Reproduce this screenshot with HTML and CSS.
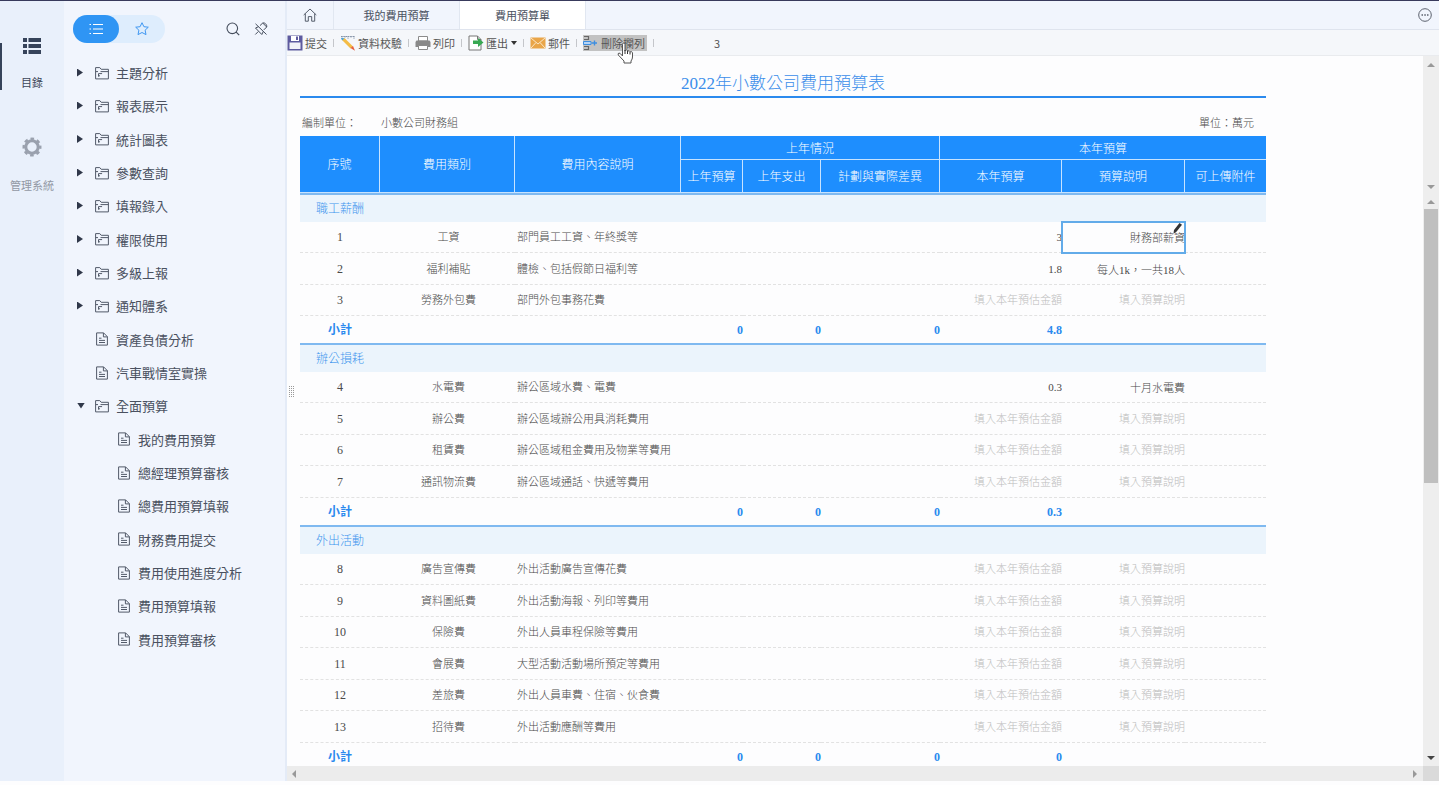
FILE: index.html
```html
<!DOCTYPE html>
<html lang="zh-Hant">
<head>
  <meta charset="UTF-8" />
  <meta name="viewport" content="width=device-width, initial-scale=1.0"/>
  <title>費用預算單</title>
  <link rel="stylesheet" href="styles.css">
</head>
<body>
  <!-- Shared icons -->
  <svg class="sprite" aria-hidden="true">
    <symbol id="i-folder" viewBox="0 0 14 14">
      <path d="M.6 12.900V1.600h4.200l1.400 1.700h7.200v9.600zM.6 5.600h2.400M5.500 5.600h7.900M3.500 10.500V7.600h3.600M3 9.800h2" fill="none" stroke="currentColor"/>
    </symbol>
    <symbol id="i-doc" viewBox="0 0 14 14">
      <path d="M1.600.9h7l3.800 3.800v8.400H1.600zM8.400.9v4h4M4 6.200h2.500M4 8.400h6M4 10.500h6" fill="none" stroke="currentColor"/>
    </symbol>
  </svg>

  <div class="app">
    <nav class="rail">
      <a href="#" class="rail-item active">
        <svg width="18" height="16" viewBox="0 0 18 16"><path d="M0 0h4v4H0zM5.500 0H18v4H5.500zM0 6h4v4H0zM5.500 6H18v4H5.500zM0 12h4v4H0zM5.500 12H18v4H5.500z" fill="#36435a"/></svg>
        <span>目錄</span>
      </a>
      <a href="#" class="rail-item">
        <svg width="20" height="20" viewBox="0 0 20 20">
          <circle cx="10" cy="10" r="6.200" fill="none" stroke="#9aa1ae" stroke-width="3"/>
          <circle cx="10" cy="10" r="8.300" fill="none" stroke="#9aa1ae" stroke-width="2.400" stroke-dasharray="3.600 2.919" stroke-dashoffset="1.800"/>
        </svg>
        <span>管理系統</span>
      </a>
    </nav>

    <aside class="sidebar">
      <div class="side-head">
        <div class="switch">
          <button type="button" class="on" aria-label="目錄">
            <svg width="14" height="12" viewBox="0 0 14 12"><path d="M4 1.500h10M4 6h10M4 10.500h10M.5 1.500H2M.5 6H2M.5 10.500H2" stroke="#fff" stroke-width="1.200"/></svg>
          </button>
          <button type="button" aria-label="收藏">
            <svg width="14" height="14" viewBox="0 0 14 14"><path d="M7 .7l1.900 4 4.400.5-3.200 3 .9 4.400L7 10.500l-4 2.100.9-4.400-3.200-3 4.400-.5z" fill="none" stroke="#3f97f2" stroke-linejoin="round"/></svg>
          </button>
        </div>
        <button type="button" class="icon-btn" aria-label="搜尋">
          <svg width="14" height="14" viewBox="0 0 14 14"><circle cx="6.300" cy="6.300" r="5.300" fill="none" stroke="#454d5c" stroke-width="1.100"/><path d="M10.200 10.200l3 3" stroke="#454d5c" stroke-width="1.200"/></svg>
        </button>
        <button type="button" class="icon-btn" aria-label="取消固定">
          <svg width="14" height="14" viewBox="0 0 14 14"><path d="M1.500 1.800l11 10.700M4.500 4.700L1.500 6l6.300 6.500 1.600-3.200M6 3.600L8.700 1l4 4-2.900 2.900M8.700 1c1.800-.8 4.600 1.600 4 4M4.300 9.500L1.300 12.500" fill="none" stroke="#454d5c"/></svg>
        </button>
      </div>
      <ul class="tree">
        <li><a href="#"><i class="caret"></i><svg><use href="#i-folder"/></svg>主題分析</a></li>
        <li><a href="#"><i class="caret"></i><svg><use href="#i-folder"/></svg>報表展示</a></li>
        <li><a href="#"><i class="caret"></i><svg><use href="#i-folder"/></svg>統計圖表</a></li>
        <li><a href="#"><i class="caret"></i><svg><use href="#i-folder"/></svg>參數查詢</a></li>
        <li><a href="#"><i class="caret"></i><svg><use href="#i-folder"/></svg>填報錄入</a></li>
        <li><a href="#"><i class="caret"></i><svg><use href="#i-folder"/></svg>權限使用</a></li>
        <li><a href="#"><i class="caret"></i><svg><use href="#i-folder"/></svg>多級上報</a></li>
        <li><a href="#"><i class="caret"></i><svg><use href="#i-folder"/></svg>通知體系</a></li>
        <li><a href="#"><i class="caret none"></i><svg><use href="#i-doc"/></svg>資產負債分析</a></li>
        <li><a href="#"><i class="caret none"></i><svg><use href="#i-doc"/></svg>汽車戰情室實操</a></li>
        <li><a href="#"><i class="caret open"></i><svg><use href="#i-folder"/></svg>全面預算</a></li>
        <li class="sub"><a href="#"><svg><use href="#i-doc"/></svg>我的費用預算</a></li>
        <li class="sub"><a href="#"><svg><use href="#i-doc"/></svg>總經理預算審核</a></li>
        <li class="sub"><a href="#"><svg><use href="#i-doc"/></svg>總費用預算填報</a></li>
        <li class="sub"><a href="#"><svg><use href="#i-doc"/></svg>財務費用提交</a></li>
        <li class="sub"><a href="#"><svg><use href="#i-doc"/></svg>費用使用進度分析</a></li>
        <li class="sub"><a href="#"><svg><use href="#i-doc"/></svg>費用預算填報</a></li>
        <li class="sub"><a href="#"><svg><use href="#i-doc"/></svg>費用預算審核</a></li>
      </ul>
      <span class="grip"></span>
    </aside>

    <main>
      <div class="tabs">
        <a href="#" class="tab home" aria-label="首頁">
          <svg width="14" height="14" viewBox="0 0 14 14"><path d="M.7 7L7 1l6.300 6M2.300 5.600v7.600h3V8.600h3.400v4.600h3V5.600" fill="none" stroke="#555d6b"/></svg>
        </a>
        <a href="#" class="tab">我的費用預算</a>
        <a href="#" class="tab active">費用預算單</a>
        <button type="button" class="more" aria-label="更多">
          <svg width="14" height="14" viewBox="0 0 14 14"><circle cx="7" cy="7" r="6.300" fill="none" stroke="#5c626e"/><path d="M3.500 6.300H5v1.400H3.500zM6.300 6.300h1.500v1.400H6.300zM9 6.300h1.500v1.400H9z" fill="#5c626e"/></svg>
        </button>
      </div>

      <div class="toolbar">
        <button type="button">
          <svg width="16" height="16" viewBox="0 0 16 16"><path d="M.5.500h15v15H.5z" fill="#5d5a9f"/><path d="M4 1h8v5H4z" fill="#fff"/><path d="M9 1.500h2V5H9z" fill="#5d5a9f"/><path d="M2.500 7.500h11V14h-11z" fill="#f2f2f8"/></svg>
          提交
        </button>
        <i class="sep"></i>
        <button type="button">
          <svg width="16" height="16" viewBox="0 0 16 16"><path d="M1 1.500h14M2 1v3M5 1v2M8 1v3M11 1v2M14 1v3" stroke="#8593a8" fill="none" stroke-dasharray="1.500 .8"/><path d="M2 5l2.500-2 8.500 8.500-2.500 2z" fill="#f4bc45"/><path d="M1 3l3.500.2-2.400 2.400z" fill="#3e9ed7"/><path d="M10.500 13l2.500-2 2 4.800z" fill="#e5603e"/></svg>
          資料校驗
        </button>
        <i class="sep"></i>
        <button type="button">
          <svg width="16" height="16" viewBox="0 0 16 16"><path d="M3.500 1.500h9V6h-9z" fill="#fff" stroke="#8b8b8b"/><path d="M1.500 5.500h13l1 1.500v5H.5V7z" fill="#898989"/><path d="M3.500 10.500h9v4h-9z" fill="#fff" stroke="#8b8b8b"/></svg>
          列印
        </button>
        <i class="sep"></i>
        <button type="button">
          <svg width="16" height="16" viewBox="0 0 16 16"><path d="M1 1h8.500L13 4.500V15H1z" fill="#fff" stroke="#777"/><path d="M9.500 1v3.500H13" fill="none" stroke="#777"/><path d="M5 5.500h5V3l5.500 4.500L10 12V9H5z" fill="#38a852"/></svg>
          匯出
          <i class="drop"></i>
        </button>
        <i class="sep"></i>
        <button type="button">
          <svg width="16" height="16" viewBox="0 0 16 16"><path d="M.5 2.500h15v11H.5z" fill="#e9a548"/><path d="M1 3l7 6 7-6M1 13l5-5.500M15 13l-5-5.500" fill="none" stroke="#fbe6c4"/></svg>
          郵件
        </button>
        <i class="sep"></i>
        <button type="button" class="hover">
          <svg width="16" height="16" viewBox="0 0 16 16"><path d="M1 1.500h4.500v3H1M1 11.500h4.500v3H1" fill="none" stroke="#666" stroke-width="1.200"/><path d="M.5 6.500H8v3H.5z" fill="#b7d5f5" stroke="#3d8ee0"/><path d="M8.500 8h5.500M11.500 5.500v5" stroke="#3d8ee0" stroke-width="1.400"/></svg>
          刪除欄列
          <svg class="cursor" width="17" height="22" viewBox="0 0 17 22"><path d="M5.500 14V2.500Q5.500 1 6.800 1T8 2.500V9q.2-1.300 1.400-1.200t1.200 1.300q1.800-1 2.500.7 2-.8 2.400 1V15q0 2-1.500 4v2H7v-2L1.300 13q-.8-1.500.7-2 1-.2 3.500 3z" fill="#fff" stroke="#555" stroke-linejoin="round"/><path d="M8 8v4M10.500 9v3M13 10v2.500" stroke="#333"/></svg>
        </button>
        <i class="sep"></i>
        <span class="page">3</span>
      </div>

      <div class="view">
        <div class="report">
          <h1>2022年小數公司費用預算表</h1>
          <div class="info">
            <span class="info-label">編制單位：</span>
            <span>小數公司財務組</span>
            <span class="unit">單位：萬元</span>
          </div>
          <table>
            <colgroup>
              <col class="c-no"><col class="c-type"><col class="c-desc"><col class="c-last"><col class="c-spent"><col class="c-diff"><col class="c-budget"><col class="c-note"><col>
            </colgroup>
            <thead>
              <tr>
                <th rowspan="2">序號</th>
                <th rowspan="2">費用類別</th>
                <th rowspan="2">費用內容說明</th>
                <th colspan="3">上年情況</th>
                <th colspan="3">本年預算</th>
              </tr>
              <tr class="second">
                <th>上年預算</th><th>上年支出</th><th>計劃與實際差異</th><th>本年預算</th><th>預算說明</th><th>可上傳附件</th>
              </tr>
            </thead>
            <tbody>
              <tr class="group"><td colspan="9">職工薪酬</td></tr>
              <tr><td>1</td><td>工資</td><td>部門員工工資、年終獎等</td><td></td><td></td><td></td>
                <td><input aria-label="本年預算" placeholder="填入本年預估金額" value="3"></td>
                <td class="selected"><input aria-label="預算說明" placeholder="填入預算說明" value="財務部薪資"><svg class="pencil" width="9" height="11" viewBox="0 0 9 11"><path d="M6.500 0L9 1.800 3 9.200.5 10.500 1 7z" fill="#333"/></svg></td><td></td></tr>
              <tr><td>2</td><td>福利補貼</td><td>體檢、包括假節日福利等</td><td></td><td></td><td></td>
                <td><input aria-label="本年預算" placeholder="填入本年預估金額" value="1.8"></td>
                <td><input aria-label="預算說明" placeholder="填入預算說明" value="每人1k，一共18人"></td><td></td></tr>
              <tr><td>3</td><td>勞務外包費</td><td>部門外包事務花費</td><td></td><td></td><td></td>
                <td><input aria-label="本年預算" placeholder="填入本年預估金額"></td>
                <td><input aria-label="預算說明" placeholder="填入預算說明"></td><td></td></tr>
              <tr class="total"><td>小計</td><td></td><td></td><td>0</td><td>0</td><td>0</td><td>4.8</td><td></td><td></td></tr>
            </tbody>
            <tbody>
              <tr class="group"><td colspan="9">辦公損耗</td></tr>
              <tr><td>4</td><td>水電費</td><td>辦公區域水費、電費</td><td></td><td></td><td></td>
                <td><input aria-label="本年預算" placeholder="填入本年預估金額" value="0.3"></td>
                <td><input aria-label="預算說明" placeholder="填入預算說明" value="十月水電費"></td><td></td></tr>
              <tr><td>5</td><td>辦公費</td><td>辦公區域辦公用具消耗費用</td><td></td><td></td><td></td>
                <td><input aria-label="本年預算" placeholder="填入本年預估金額"></td>
                <td><input aria-label="預算說明" placeholder="填入預算說明"></td><td></td></tr>
              <tr><td>6</td><td>租賃費</td><td>辦公區域租金費用及物業等費用</td><td></td><td></td><td></td>
                <td><input aria-label="本年預算" placeholder="填入本年預估金額"></td>
                <td><input aria-label="預算說明" placeholder="填入預算說明"></td><td></td></tr>
              <tr><td>7</td><td>通訊物流費</td><td>辦公區域通話、快遞等費用</td><td></td><td></td><td></td>
                <td><input aria-label="本年預算" placeholder="填入本年預估金額"></td>
                <td><input aria-label="預算說明" placeholder="填入預算說明"></td><td></td></tr>
              <tr class="total"><td>小計</td><td></td><td></td><td>0</td><td>0</td><td>0</td><td>0.3</td><td></td><td></td></tr>
            </tbody>
            <tbody>
              <tr class="group"><td colspan="9">外出活動</td></tr>
              <tr><td>8</td><td>廣告宣傳費</td><td>外出活動廣告宣傳花費</td><td></td><td></td><td></td>
                <td><input aria-label="本年預算" placeholder="填入本年預估金額"></td>
                <td><input aria-label="預算說明" placeholder="填入預算說明"></td><td></td></tr>
              <tr><td>9</td><td>資料圖紙費</td><td>外出活動海報、列印等費用</td><td></td><td></td><td></td>
                <td><input aria-label="本年預算" placeholder="填入本年預估金額"></td>
                <td><input aria-label="預算說明" placeholder="填入預算說明"></td><td></td></tr>
              <tr><td>10</td><td>保險費</td><td>外出人員車程保險等費用</td><td></td><td></td><td></td>
                <td><input aria-label="本年預算" placeholder="填入本年預估金額"></td>
                <td><input aria-label="預算說明" placeholder="填入預算說明"></td><td></td></tr>
              <tr><td>11</td><td>會展費</td><td>大型活動活動場所預定等費用</td><td></td><td></td><td></td>
                <td><input aria-label="本年預算" placeholder="填入本年預估金額"></td>
                <td><input aria-label="預算說明" placeholder="填入預算說明"></td><td></td></tr>
              <tr><td>12</td><td>差旅費</td><td>外出人員車費、住宿、伙食費</td><td></td><td></td><td></td>
                <td><input aria-label="本年預算" placeholder="填入本年預估金額"></td>
                <td><input aria-label="預算說明" placeholder="填入預算說明"></td><td></td></tr>
              <tr><td>13</td><td>招待費</td><td>外出活動應酬等費用</td><td></td><td></td><td></td>
                <td><input aria-label="本年預算" placeholder="填入本年預估金額"></td>
                <td><input aria-label="預算說明" placeholder="填入預算說明"></td><td></td></tr>
              <tr class="total"><td>小計</td><td></td><td></td><td>0</td><td>0</td><td>0</td><td>0</td><td></td><td></td></tr>
            </tbody>
          </table>
        </div>
        <div class="vbars">
          <div class="vbar head"><i class="up"></i><i class="down"></i></div>
          <div class="vbar body"><i class="up"></i><span class="thumb"></span><i class="down dark"></i></div>
        </div>
      </div>
      <div class="hbar"><i class="left"></i><i class="right"></i><span class="corner"></span></div>
    </main>
  </div>
</body>
</html>
```
FILE: styles.css
```css
* { box-sizing: border-box; }
body { margin: 0; height: 100vh; overflow: hidden; background: #fdfdfe; color: #4a5160; font-family: "Noto Sans CJK TC", sans-serif; font-size: 11px; }
a { color: inherit; text-decoration: none; }
button { border: 0; padding: 0; background: none; color: inherit; font: inherit; }
svg { display: block; flex: none; }
.sprite { position: absolute; width: 0; height: 0; }
.app { display: flex; height: 100%; padding-bottom: 4px; border-top: 1px solid #383a5c; }

/* left rail */
.rail { position: relative; width: 64px; padding-top: 37px; background: #e9f0fb; display: flex; flex-direction: column; gap: 46px; }
.rail::before { content: ""; position: absolute; left: 0; top: 42px; width: 2px; height: 47px; background: #36435a; }
.rail-item { display: flex; flex-direction: column; align-items: center; gap: 19px; line-height: 18px; color: #9298a4; }
.rail-item.active { color: #3c4658; }

/* tree */
.sidebar { position: relative; width: 223px; background: #f1f5fd; border-right: 2px solid #e4ebf7; }
.side-head { display: flex; align-items: center; gap: 14px; padding: 14px 17px 0 9px; }
.switch { display: flex; margin-right: auto; border-radius: 14px; background: #deedfd; }
.switch button { width: 46px; height: 28px; border-radius: 14px; display: flex; align-items: center; justify-content: center; }
.switch .on { background: #2f95f4; }
.tree { list-style: none; margin: 13px 0 0; padding: 0; font-size: 13px; }
.tree li { height: 33px; }
.tree li:nth-child(3n) { height: 34px; }
.tree a { height: 100%; display: flex; align-items: center; padding-left: 13px; }
.tree .sub a { padding-left: 53px; }
.tree svg { width: 14px; height: 14px; margin-right: 7px; color: #525a69; }
.caret { width: 6px; height: 8px; margin-right: 12px; background: #30384a; clip-path: polygon(0 0, 100% 50%, 0 100%); }
.caret.open { width: 8px; height: 6px; margin-right: 10px; clip-path: polygon(0 0, 100% 0, 50% 100%); }
.caret.none { visibility: hidden; }
.grip { position: absolute; z-index: 1; right: -9px; top: 384px; width: 5px; height: 13px; background: repeating-linear-gradient(#fdfdfe 0 1px, transparent 1px 2px), repeating-linear-gradient(90deg, #999 0 1px, #fdfdfe 1px 2px); }

/* main area */
main { flex: 1; min-width: 0; display: flex; flex-direction: column; }
.tabs { display: flex; height: 29px; background: #f1f5fd; border-bottom: 1px solid #dfe4ee; }
.tab { width: 126px; display: flex; align-items: center; justify-content: center; border-right: 1px solid #e1e7f1; }
.tab.home { width: 47px; }
.tab.active { background: #fff; }
.more { margin-left: auto; padding-right: 7px; }
.toolbar { display: flex; align-items: center; height: 26px; background: #f5f7fa; border-bottom: 1px solid #e9ebee; color: #555; }
.toolbar button { position: relative; display: flex; align-items: center; gap: 2px; height: 16px; line-height: 16px; white-space: nowrap; }
.toolbar .hover { background: #c2c2c2; padding-right: 2px; }
.cursor { position: absolute; left: 34px; top: 7px; z-index: 2; }
.sep { width: 1px; height: 8px; margin: 0 6px; background: #c4c6ca; }
.drop { margin-left: 1px; border: 3px solid transparent; border-top: 4px solid #333; border-bottom: 0; }
.page { margin-left: 54px; }

.view { flex: 1; min-height: 0; display: flex; }
.report { flex: 1; min-width: 0; overflow: hidden; padding: 14px 157px 0 13px; font-family: "Liberation Serif", "Noto Sans CJK TC", serif; font-weight: 300; color: #4a4a4a; }
h1 { margin: 0; height: 28px; line-height: 28px; border-bottom: 2px solid #2b8aee; color: #3b8eea; font-size: 17px; font-weight: 300; text-align: center; }
.info { display: flex; height: 38px; padding: 15px 12px 0 2px; line-height: 20px; }
.info-label { width: 79px; }
.unit { margin-left: auto; }

table { width: 100%; table-layout: fixed; border-spacing: 0; }
.c-no { width: 80px; }
.c-type { width: 135px; }
.c-desc { width: 166px; }
.c-last { width: 62px; }
.c-spent { width: 78px; }
.c-diff { width: 119px; }
.c-budget { width: 122px; }
.c-note { width: 123px; }
th { height: 24px; padding: 2px 0 0; background: #1e8efe; border: solid #c7e3ff; border-width: 0 1px 1px 0; color: #fff; font-size: 12px; font-weight: 300; line-height: 18px; white-space: nowrap; }
th:last-child { border-right: 0; }
.second th { height: 33px; }
td { height: 31px; padding: 0; border-bottom: 1px dashed #e2e2e2; line-height: 18px; text-align: center; white-space: nowrap; }
tr:nth-child(odd) td { height: 32px; }
td:first-child { font-size: 12px; }
td:nth-child(2) { padding-left: 2px; }
td:nth-child(3) { padding-left: 2px; text-align: left; }
tr.group td { height: 29px; padding-left: 16px; background: #ebf4fc; border-top: 2px solid #7fb9f0; border-bottom: 0; color: #3d94ee; text-align: left; }
tr.total td { height: 27px; border: 0; color: #2b8aee; font-size: 12px; font-weight: bold; text-align: right; }
tr.total td:first-child { text-align: center; }
td input { display: block; width: 100%; height: 20px; padding: 0; border: 0; outline: 0; background: none; color: #4a4a4a; font: inherit; text-align: right; }
td input::placeholder { color: #bcbcbc; }
td.selected { position: relative; outline: 2px solid #62abe9; outline-offset: -1px; }
.pencil { position: absolute; right: 3px; top: 1px; }

/* scrollbars */
.vbars { width: 16px; display: flex; flex-direction: column; background: #eee; }
.vbar { display: flex; flex-direction: column; align-items: center; }
.vbar.head { height: 136px; padding: 7px 0 3px; justify-content: space-between; }
.vbar.body { flex: 1; padding: 8px 0 6px; }
.thumb { width: 14px; height: 49%; margin-top: 5px; background: #bfbfbf; }
.up, .down { border: 4px solid transparent; }
.up { border-top: 0; border-bottom: 4px solid #999; }
.down { border-bottom: 0; border-top: 4px solid #999; }
.down.dark { margin-top: auto; border-top-color: #444; }
.hbar { display: flex; align-items: center; height: 15px; padding-left: 5px; background: #ececec; }
.left, .right { border: 4px solid transparent; }
.left { border-left: 0; border-right: 4px solid #999; }
.right { margin-left: auto; margin-right: 6px; border-right: 0; border-left: 4px solid #999; }
.corner { width: 16px; height: 15px; background: #dadada; }
```
